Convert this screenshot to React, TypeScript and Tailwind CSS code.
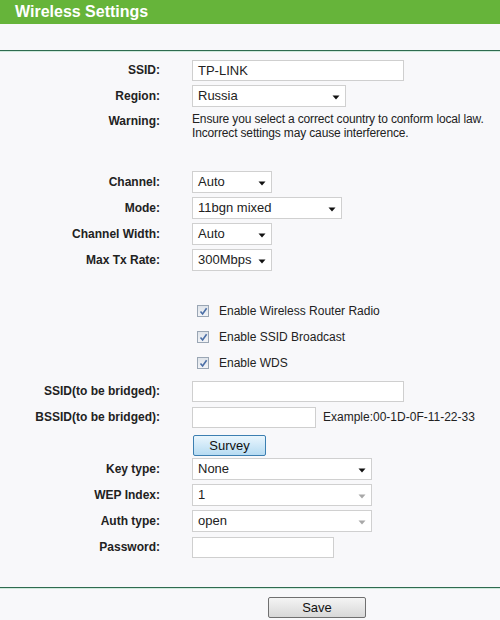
import React from 'react';

function Arrow({ disabled }: { disabled?: boolean }) {
  return (
    <svg width="8" height="5" viewBox="0 0 8 5" className="absolute right-[5px] top-[9px]">
      <path d="M0.5 0.5 L7.5 0.5 L4 4.5 Z" fill={disabled ? '#a8a8a8' : '#111'} />
    </svg>
  );
}

function Select({ value, width, disabled }: { value: string; width: string; disabled?: boolean }) {
  return (
    <div
      className={`relative h-[22px] ${width} border border-[#d0d0d0] bg-white pl-[5px] text-[13px] leading-[20px] text-[#222]`}
    >
      {value}
      <Arrow disabled={disabled} />
    </div>
  );
}

function Input({ value, width }: { value?: string; width: string }) {
  return (
    <div
      className={`h-[21px] ${width} border border-[#cfcfcf] bg-white pl-[5px] text-[13px] leading-[19px] text-[#222]`}
    >
      {value}
    </div>
  );
}

function Row({ label, children, className = 'h-[26px] items-center' }: { label?: string; children: React.ReactNode; className?: string }) {
  return (
    <div className={`flex ${className}`}>
      <div className="w-[160px] shrink-0 text-right text-[12px] font-bold text-[#222]">{label}</div>
      <div className="ml-[32px] flex items-center">{children}</div>
    </div>
  );
}

function Check({ label }: { label: string }) {
  return (
    <div className="flex h-[26px] items-center">
      <div className="ml-[197px] flex h-[12px] w-[12px] items-center justify-center border border-[#9aa6b4] bg-gradient-to-b from-[#dfe4ea] to-[#f2f4f7]">
        <svg width="9" height="9" viewBox="0 0 9 9">
          <path d="M1.5 4.5 L3.6 7 L7.6 1.2" stroke="#4a6ea6" strokeWidth="1.6" fill="none" />
        </svg>
      </div>
      <span className="ml-[10px] text-[12px] text-[#222]">{label}</span>
    </div>
  );
}

export default function App() {
  return (
    <div className="h-[620px] w-[500px] overflow-hidden bg-[#f8f8fa] font-['Liberation_Sans',Arial,sans-serif]">
      <div className="h-[24px] bg-[#66b43a] pl-[15px] text-[16px] font-bold leading-[24px] text-white">
        Wireless Settings
      </div>
      <div className="mt-[26px] h-px bg-[#2e6b4f]" />
      <div className="h-px bg-[#cfe9dc]" />

      <div className="mt-[5px] flex flex-col">
        <Row label="SSID:">
          <Input value="TP-LINK" width="w-[212px]" />
        </Row>
        <Row label="Region:">
          <Select value="Russia" width="w-[154px]" />
        </Row>
        <Row label="Warning:" className="mt-[3px] items-start">
          <div className="text-[12px] leading-[14px] tracking-[-0.15px] text-[#222]">
            Ensure you select a correct country to conform local law.
            <br />
            Incorrect settings may cause interference.
          </div>
        </Row>

        <div className="mt-[29px]">
          <Row label="Channel:">
            <Select value="Auto" width="w-[80px]" />
          </Row>
          <Row label="Mode:">
            <Select value="11bgn mixed" width="w-[150px]" />
          </Row>
          <Row label="Channel Width:">
            <Select value="Auto" width="w-[80px]" />
          </Row>
          <Row label="Max Tx Rate:">
            <Select value="300Mbps" width="w-[80px]" />
          </Row>
        </div>

        <div className="mt-[25px]">
          <Check label="Enable Wireless Router Radio" />
          <Check label="Enable SSID Broadcast" />
          <Check label="Enable WDS" />
        </div>

        <div className="mt-[2px]">
          <Row label="SSID(to be bridged):">
            <Input width="w-[212px]" />
          </Row>
          <Row label="BSSID(to be bridged):">
            <Input width="w-[124px]" />
            <span className="ml-[7px] text-[12px] text-[#222]">Example:00-1D-0F-11-22-33</span>
          </Row>
          <Row className="h-[26px] items-center pt-[4px]">
            <button className="ml-px h-[21px] w-[73px] rounded-[2px] border border-[#3c7fb1] bg-gradient-to-b from-[#eaf6fd] to-[#b6dbf2] text-[13px] leading-[19px] text-[#111]">
              Survey
            </button>
          </Row>
          <Row label="Key type:">
            <Select value="None" width="w-[180px]" />
          </Row>
          <Row label="WEP Index:">
            <Select value="1" width="w-[180px]" disabled />
          </Row>
          <Row label="Auth type:">
            <Select value="open" width="w-[180px]" disabled />
          </Row>
          <Row label="Password:">
            <Input width="w-[142px]" />
          </Row>
        </div>
      </div>

      <div className="mt-[27px] h-px bg-[#2e6b4f]" />
      <div className="h-px bg-[#cfe9dc]" />
      <div className="mt-[8px] flex">
        <button className="ml-[268px] h-[21px] w-[98px] rounded-[2px] border border-[#707070] bg-gradient-to-b from-[#f4f4f4] to-[#d8d8d8] text-[13px] leading-[19px] text-[#111]">
          Save
        </button>
      </div>
    </div>
  );
}
